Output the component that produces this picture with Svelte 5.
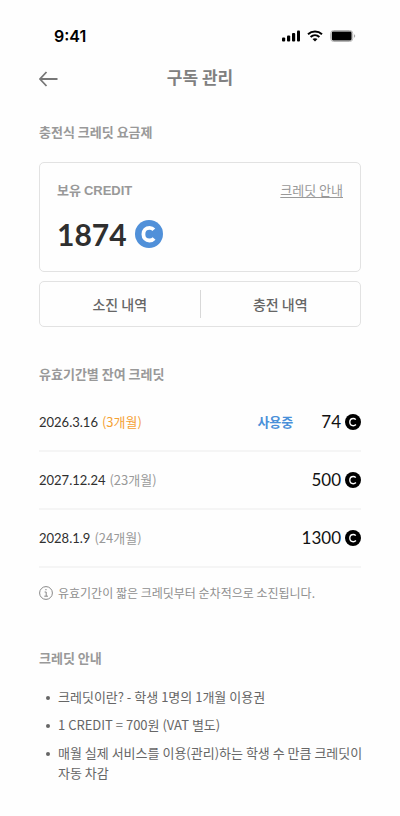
<script lang="ts">
  type Credit = {
    date: string
    months: number
    amount: number
    active?: boolean
  }

  const balance = 1874

  const credits: Credit[] = [
    {date: '2026.3.16', months: 3, amount: 74, active: true},
    {date: '2027.12.24', months: 23, amount: 500},
    {date: '2028.1.9', months: 24, amount: 1300},
  ]

  const notes = [
    '크레딧이란? - 학생 1명의 1개월 이용권',
    '1 CREDIT = 700원 (VAT 별도)',
    '매월 실제 서비스를 이용(관리)하는 학생 수 만큼 크레딧이 자동 차감',
  ]
</script>

{#snippet coin(large = false)}
  <svg class={['coin', large && 'large']} viewBox="0 0 28 28" aria-hidden="true">
    <circle cx="14" cy="14" r="14" />
    <path
      d="M18.8 9.8C17.7 8.5 16.4 7.9 14.6 7.9C10.9 7.9 8.4 10.4 8.4 14.2C8.4 18 10.9 20.5 14.4 20.5C16.4 20.5 17.9 19.8 19.1 18.4"
    />
  </svg>
{/snippet}

<div class="screen">
  <div class="status">
    <span class="time">9:41</span>
    <div class="indicators">
      <svg width="18" height="12" viewBox="0 0 18 12" aria-hidden="true">
        <rect x="0" y="7.5" width="3.2" height="4" rx="1" />
        <rect x="5" y="5.5" width="3.2" height="6" rx="1" />
        <rect x="10" y="3" width="3.2" height="8.5" rx="1" />
        <rect x="15" y="0.5" width="3" height="11" rx="1" />
      </svg>
      <svg width="16" height="12" viewBox="0 0 16 12" aria-hidden="true">
        <path
          d="M1 4.2C5 .6 11 .6 15 4.2M3.6 7C6.1 4.8 9.9 4.8 12.4 7"
          fill="none"
          stroke="#000"
          stroke-width="2"
        />
        <path d="M5.5 9.1C6.9 7.8 9.1 7.8 10.5 9.1L8 11.6Z" />
      </svg>
      <svg width="26" height="12" viewBox="0 0 26 12" aria-hidden="true">
        <rect x="0.7" y="0.5" width="22" height="11" rx="3" fill="none" stroke="#b5b5b5" />
        <rect x="1.8" y="1.6" width="19.8" height="8.8" rx="1.4" />
        <path d="M24 4.2C25.7 4.8 25.7 7.2 24 7.8Z" fill="#aaa" />
      </svg>
    </div>
  </div>

  <header>
    <button type="button" class="back" aria-label="뒤로">
      <svg width="20" height="16" viewBox="0 0 20 16" aria-hidden="true">
        <path d="M7.5 1L1 8L7.5 15M1 8H18.5" />
      </svg>
    </button>
    <h1>구독 관리</h1>
  </header>

  <main>
    <section>
      <h2>충전식 크레딧 요금제</h2>
      <div class="card">
        <div class="card-top">
          <span class="label">보유 <b>CREDIT</b></span>
          <a href="#guide">크레딧 안내</a>
        </div>
        <div class="balance">
          <strong>{balance}</strong>
          {@render coin(true)}
        </div>
      </div>
      <div class="history">
        <button type="button">소진 내역</button>
        <button type="button">충전 내역</button>
      </div>
    </section>

    <section>
      <h2>유효기간별 잔여 크레딧</h2>
      <ul class="credits">
        {#each credits as credit (credit.date)}
          <li>
            <span class="date">{credit.date}</span>
            <span class={['months', credit.active && 'soon']}>({credit.months}개월)</span>
            {#if credit.active}
              <span class="active">사용중</span>
            {/if}
            <span class="amount">{credit.amount}</span>
            {@render coin()}
          </li>
        {/each}
      </ul>
      <p class="info">
        <svg width="14" height="14" viewBox="0 0 14 14" aria-hidden="true">
          <circle cx="7" cy="7" r="6.4" />
          <path d="M5.6 6H7.2V10.2M5.3 10.2H9" />
          <path d="M6.4 3.7H7.5" stroke-width="1.3" />
        </svg>
        유효기간이 짧은 크레딧부터 순차적으로 소진됩니다.
      </p>
    </section>

    <section id="guide">
      <h2>크레딧 안내</h2>
      <ul class="notes">
        {#each notes as note}
          <li>{note}</li>
        {/each}
      </ul>
    </section>
  </main>
</div>

<style>
  :global(body) {
    margin: 0;
    background: #fefefe;
  }

  .screen {
    padding: 24px 39px 32px;
    font-family: 'Noto Sans CJK KR', sans-serif;
    font-size: 13px;
    line-height: 20px;
    color: #666;
  }

  h1,
  h2,
  p,
  ul {
    margin: 0;
    padding: 0;
  }

  ul {
    list-style: none;
  }

  button {
    padding: 0;
    border: 0;
    background: none;
    font: inherit;
    color: inherit;
    cursor: pointer;
  }

  .status {
    display: flex;
    align-items: center;
    justify-content: space-between;
    height: 24px;
    padding: 0 5px 0 15px;
  }

  .time {
    font-family: Inter, sans-serif;
    font-size: 16px;
    font-weight: 600;
    color: #000;
  }

  .indicators {
    display: flex;
    gap: 7px;
  }

  header {
    display: grid;
    grid-template-columns: 20px 1fr 20px;
    align-items: center;
    height: 24px;
    margin-top: 17px;
  }

  .back {
    display: flex;
    padding-top: 4px;
  }

  .back path {
    fill: none;
    stroke: #777;
    stroke-width: 1.8;
  }

  h1 {
    font-size: 17px;
    font-weight: 700;
    line-height: 24px;
    text-align: center;
    color: #808080;
  }

  main {
    display: flex;
    flex-direction: column;
    gap: 37px;
    margin-top: 33px;
  }

  h2 {
    font-size: 13px;
    font-weight: 700;
    line-height: 20px;
    color: #999;
  }

  .card {
    margin-top: 20px;
    padding: 17px;
    border: 1px solid #e2e2e2;
    border-radius: 5px;
  }

  .card-top {
    display: flex;
    justify-content: space-between;
    color: #999;
  }

  .label {
    font-weight: 700;
  }

  .label b {
    font-family: 'Liberation Sans', sans-serif;
  }

  .card-top a {
    color: inherit;
    text-decoration: underline;
    text-decoration-thickness: 1px;
    text-underline-offset: 2px;
  }

  .balance {
    display: flex;
    align-items: center;
    gap: 8px;
    padding-top: 13px;
  }

  .balance strong {
    font-family: Lato, sans-serif;
    font-size: 30px;
    font-weight: 700;
    line-height: 40px;
    color: #2f2f2f;
  }

  .coin {
    flex: none;
    width: 16px;
    height: 16px;
    fill: #000;
  }

  .coin path {
    fill: none;
    stroke: #fff;
    stroke-width: 2.4;
  }

  .coin.large {
    width: 28px;
    height: 28px;
    fill: #5090d9;
  }

  .coin.large path {
    stroke-width: 3.8;
  }

  .history {
    display: flex;
    margin-top: 9px;
    padding: 8px 0;
    border: 1px solid #e2e2e2;
    border-radius: 5px;
  }

  .history button {
    flex: 1;
    height: 28px;
    font-size: 14px;
    font-weight: 500;
  }

  .history button + button {
    border-left: 1px solid #d8d8d8;
  }

  .credits {
    margin-top: 10px;
  }

  .credits li {
    display: flex;
    align-items: center;
    height: 56px;
    border-bottom: 2px solid #f5f5f5;
  }

  .date {
    font-family: Lato, sans-serif;
    font-size: 13px;
    color: #2f2f2f;
  }

  .months {
    margin-left: 4px;
    color: #999;
  }

  .months.soon {
    color: #f5a133;
  }

  .active {
    margin-left: auto;
    font-weight: 700;
    color: #4a90d9;
  }

  .amount {
    margin-left: auto;
    font-family: Lato, sans-serif;
    font-size: 17px;
    color: #111;
  }

  .active + .amount {
    margin-left: 28px;
  }

  .credits .coin {
    margin-left: 4px;
  }

  .info {
    display: flex;
    align-items: center;
    gap: 5px;
    margin: 15px 0 8px;
    font-size: 12px;
    color: #8f8f8f;
  }

  .info svg {
    fill: none;
    stroke: #888;
    stroke-width: 1;
  }

  /* Runs slightly into the page padding, so a full line keeps its last word. */
  .notes {
    display: flex;
    flex-direction: column;
    gap: 8px;
    margin: 19px -4px 0 0;
  }

  .notes li {
    display: flex;
    gap: 8px;
  }

  .notes li::before {
    content: '';
    flex: none;
    width: 4px;
    height: 4px;
    margin: 9px 0 0 7px;
    border-radius: 50%;
    background: #666;
  }
</style>
